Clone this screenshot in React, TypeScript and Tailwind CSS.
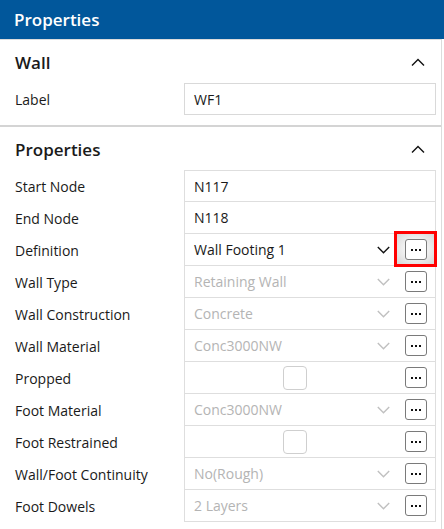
import React from "react";

type Row = {
  label: string;
  kind: "text" | "select" | "check";
  value?: string;
  enabled?: boolean;
  more?: boolean;
  highlight?: boolean;
};

const ROWS: Row[] = [
  { label: "Start Node", kind: "text", value: "N117", enabled: true },
  { label: "End Node", kind: "text", value: "N118", enabled: true },
  { label: "Definition", kind: "select", value: "Wall Footing 1", enabled: true, more: true, highlight: true },
  { label: "Wall Type", kind: "select", value: "Retaining Wall", more: true },
  { label: "Wall Construction", kind: "select", value: "Concrete", more: true },
  { label: "Wall Material", kind: "select", value: "Conc3000NW", more: true },
  { label: "Propped", kind: "check", more: true },
  { label: "Foot Material", kind: "select", value: "Conc3000NW", more: true },
  { label: "Foot Restrained", kind: "check", more: true },
  { label: "Wall/Foot Continuity", kind: "select", value: "No(Rough)", more: true },
  { label: "Foot Dowels", kind: "select", value: "2 Layers", more: true },
];

function ChevronUp() {
  return (
    <svg width="14" height="8" viewBox="0 0 14 8" fill="none">
      <path d="M1 7.5L7 1.5L13 7.5" stroke="#111" strokeWidth="1.4" />
    </svg>
  );
}

function ChevronDown({ color }: { color: string }) {
  return (
    <svg width="13" height="8" viewBox="0 0 13 8" fill="none">
      <path d="M0.8 1L6.5 6.7L12.2 1" stroke={color} strokeWidth="1.4" />
    </svg>
  );
}

function MoreButton({ highlight }: { highlight?: boolean }) {
  return (
    <div className="relative">
      {highlight && (
        <div className="absolute -left-[11px] -top-[8px] h-[36px] w-[43px] border-[3px] border-[#ff0000] bg-[radial-gradient(ellipse_at_center,#f4f4f4_40%,#d6d6d6_100%)]" />
      )}
      <div className="relative flex h-[21px] w-[22px] items-center justify-center gap-[2px] rounded-[3px] border border-[#7a7a7a] bg-white">
        <span className="h-[2px] w-[2px] bg-[#111]" />
        <span className="h-[2px] w-[2px] bg-[#111]" />
        <span className="h-[2px] w-[2px] bg-[#111]" />
      </div>
    </div>
  );
}

function Cell({ row }: { row: Row }) {
  const color = row.enabled ? "text-[#1a1a1a]" : "text-[#b4b4b4]";
  return (
    <div className="flex h-full items-center">
      {row.kind === "check" ? (
        <div className="flex flex-1 justify-center">
          <div className="h-[24px] w-[24px] rounded-[4px] border border-[#cfcfcf] bg-white" />
        </div>
      ) : (
        <div className={`flex-1 pl-[9px] ${color}`}>{row.value}</div>
      )}
      {row.kind === "select" && (
        <div className="mr-[15px]">
          <ChevronDown color={row.enabled ? "#111" : "#c0c0c0"} />
        </div>
      )}
      {row.more && (
        <div className="mr-[8px]">
          <MoreButton highlight={row.highlight} />
        </div>
      )}
    </div>
  );
}

export default function App() {
  return (
    <div className="h-[529px] w-[444px] overflow-hidden bg-white font-['Segoe_UI','Open_Sans',sans-serif] text-[14px] text-[#1a1a1a]">
      <div className="flex h-[39px] items-center bg-[#01579b] px-[14px] text-[17px] font-semibold text-white">
        Properties
      </div>
      <div className="h-[490px] w-[442px] border-r border-t border-[#dcdcdc]">
        {/* Wall */}
        <div className="flex h-[39px] items-end justify-between pl-[15px] pr-[16px] pb-[4px]">
          <span className="text-[17px] font-semibold">Wall</span>
          <span className="pb-[9px]">
            <ChevronUp />
          </span>
        </div>
        <div className="mt-[4px] flex h-[32px] items-center">
          <div className="w-[184px] pl-[15px]">Label</div>
          <div className="flex h-full w-[252px] items-center border border-[#d9d9d9] pl-[9px]">WF1</div>
        </div>
        <div className="mt-[10px] h-[2px] w-full bg-[#d4d4d4]" />

        {/* Properties */}
        <div className="flex h-[37px] items-end justify-between pl-[15px] pr-[16px] pb-[2px]">
          <span className="text-[17px] font-semibold">Properties</span>
          <span className="pb-[9px]">
            <ChevronUp />
          </span>
        </div>
        <div className="mt-[6px]">
          {ROWS.map((row, i) => (
            <div key={row.label} className="flex h-[32px] items-center">
              <div className="w-[184px] pl-[15px]">{row.label}</div>
              <div
                className={`h-full w-[252px] border-x border-b border-[#dedede] ${i === 0 ? "border-t" : ""}`}
              >
                <Cell row={row} />
              </div>
            </div>
          ))}
        </div>
      </div>
    </div>
  );
}
